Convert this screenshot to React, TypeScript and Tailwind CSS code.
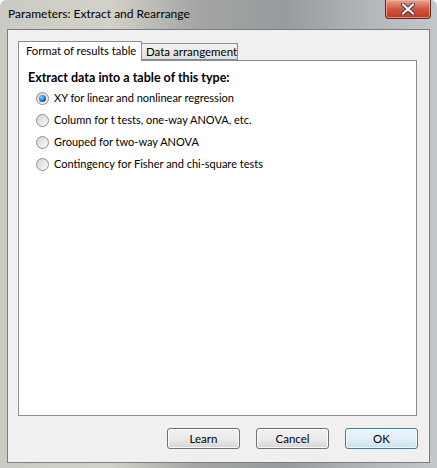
import { useState } from 'react';

const options = [
  "XY for linear and nonlinear regression",
  "Column for t tests, one-way ANOVA, etc.",
  "Grouped for two-way ANOVA",
  "Contingency for Fisher and chi-square tests",
];

function Radio({ checked }: { checked: boolean }) {
  return (
    <span className="relative flex h-[13px] w-[13px] shrink-0 items-center justify-center rounded-full border border-[#8e8f8f] bg-gradient-to-br from-[#d4d4d4] to-[#fbfbfb]">
      {checked && (
        <span className="h-[7px] w-[7px] rounded-full bg-[radial-gradient(circle_at_35%_35%,#8ed2ff,#1b63b8_60%,#0d3f80)]" />
      )}
    </span>
  );
}

function DialogButton({ label, primary = false }: { label: string; primary?: boolean }) {
  return (
    <button
      className={`h-[21px] w-[73px] rounded-[3px] border text-[11.5px] text-black ${
        primary
          ? "border-[#3c7fb1] bg-gradient-to-b from-[#eaf6fd] via-[#e3f0f8] to-[#c6e2f2] shadow-[inset_0_0_0_1px_#ffffffaa]"
          : "border-[#707070] bg-gradient-to-b from-[#f2f2f2] via-[#ebebeb] to-[#d5d5d5] shadow-[inset_0_0_0_1px_#ffffffcc]"
      }`}
    >
      {label}
    </button>
  );
}

export default function App() {
  const [selected, setSelected] = useState(0);

  return (
    <div
      className="relative h-[468px] w-[437px] overflow-hidden rounded-t-[6px] bg-[linear-gradient(90deg,#c9cbc4_0%,#d3d2c8_25%,#a4a6a4_45%,#979b9f_65%,#b3b7ba_85%,#c4c8cb_100%)] whitespace-nowrap"
      style={{ fontFamily: 'Lato, "Noto Sans", sans-serif' }}
    >
      {/* title bar */}
      <div className="flex h-[29px] items-center pb-[2px] pl-[8px] text-[12px] text-black">
        Parameters: Extract and Rearrange
      </div>
      <div className="absolute right-[6px] top-0 flex h-[19px] w-[46px] items-center justify-center rounded-b-[4px] border border-t-0 border-[#5b2a22] bg-gradient-to-b from-[#e8a493] via-[#d0553d] to-[#c2371e] shadow-[inset_0_0_0_1px_#f2b8a8aa]">
        <svg width="14" height="12" viewBox="0 0 14 12">
          <path
            d="M2 1.5 L12 10.5 M12 1.5 L2 10.5"
            stroke="#3a3a4a"
            strokeWidth="4"
            strokeLinecap="round"
          />
          <path
            d="M2 1.5 L12 10.5 M12 1.5 L2 10.5"
            stroke="#ffffff"
            strokeWidth="2.2"
            strokeLinecap="round"
          />
        </svg>
      </div>

      {/* client area */}
      <div className="mx-[7px] flex h-[434px] flex-col border border-[#7a7d80] bg-[#f0f0f0] pl-[10px] pr-[11px] pt-[11px] text-[11px] text-black">
        <div className="flex h-[19px] items-end">
          <div className="relative z-10 -mb-px flex h-[20px] w-[124px] items-center border border-b-0 border-[#898c95] bg-white pb-[1px] pl-[7px] text-[11.2px]">
            Format of results table
          </div>
          <div className="flex h-[17px] w-[96px] items-center border border-l-0 border-[#898c95] bg-gradient-to-b from-[#f2f2f2] to-[#e0e0e0] pl-[4px] text-[11.5px]">
            Data arrangement
          </div>
        </div>
        <div className="h-[356px] w-[399px] border border-[#898c95] bg-white pl-[9px] pt-[8px]">
          <div className="text-[12.5px] font-bold leading-[17px]">Extract data into a table of this type:</div>
          <div className="mt-[4px] flex flex-col gap-[5px] pl-[8px]">
            {options.map((opt, i) => (
              <label
                key={opt}
                onClick={() => setSelected(i)}
                className="flex h-[17px] items-center gap-[5px]"
              >
                <Radio checked={selected === i} />
                <span>{opt}</span>
              </label>
            ))}
          </div>
        </div>
        <div className="mt-[12px] flex justify-end gap-[16px]">
          <DialogButton label="Learn" />
          <DialogButton label="Cancel" />
          <DialogButton label="OK" primary />
        </div>
      </div>
    </div>
  );
}
